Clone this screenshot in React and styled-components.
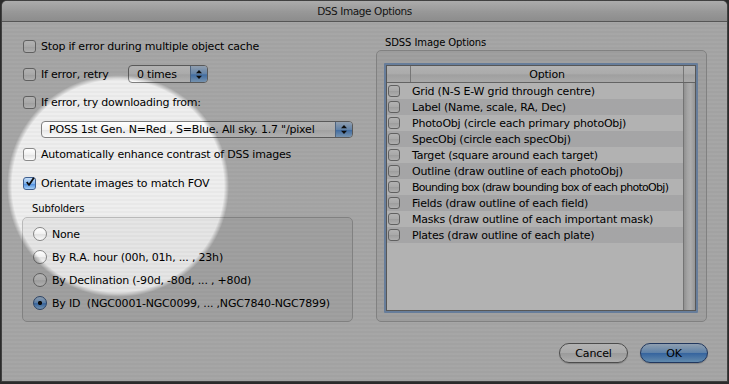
import React from 'react'
import styled, { createGlobalStyle } from 'styled-components'

const GlobalStyle = createGlobalStyle`
  html, body { margin: 0; padding: 0; background: #3d3d3d; }
  body { font-family: "DejaVu Sans", "Liberation Sans", sans-serif; }
  * { box-sizing: border-box; }
`

const Screen = styled.div`
  position: relative;
  width: 729px;
  height: 384px;
  overflow: hidden;
  background: #3d3d3d;
`

const Window = styled.div`
  width: 727px;
  height: 382px;
  margin-left: 1px;
  display: flex;
  flex-direction: column;
  border: 1px solid #5c5c5c;
  border-radius: 6px 6px 0 0;
  overflow: hidden;
  background: repeating-linear-gradient(to bottom, #eeeeee 0, #eeeeee 2px, #e8e8e8 2px, #e8e8e8 4px);
`

const TitleBar = styled.div`
  height: 21px;
  flex: none;
  display: flex;
  align-items: center;
  justify-content: center;
  background: linear-gradient(#f6f6f6, #d9d9d9 55%, #c9c9c9);
  border-bottom: 1px solid #7a7a7a;
  font-size: 10.5px;
  letter-spacing: -0.4px;
  color: #1c1c1c;
`

const Content = styled.div`
  flex: 1;
  display: flex;
  flex-direction: column;
  padding: 15px 19px 0 20px;
`

const Columns = styled.div`
  display: grid;
  grid-template-columns: 331px 331px;
  column-gap: 23px;
`

const Column = styled.div`
  display: flex;
  flex-direction: column;
`

const OptionRow = styled.div`
  display: flex;
  align-items: center;
  gap: 5px;
  height: ${(p) => p.$h || 16}px;
  margin-top: ${(p) => p.$top || 0}px;
  padding-left: ${(p) => (p.$indent == null ? 1 : p.$indent)}px;
`

const Text = styled.span`
  font-size: 11px;
  letter-spacing: ${(p) => (p.$condensed ? '-0.72px' : '-0.2px')};
  color: #000;
  white-space: pre;
  ${(p) => p.$w && `width: ${p.$w}px;`}
`

const SmallLabel = styled.div`
  font-size: 10px;
  letter-spacing: -0.1px;
  color: #000;
  height: 12px;
  line-height: 12px;
  margin-top: ${(p) => p.$top || 0}px;
  padding-left: ${(p) => p.$indent || 0}px;
`

const Box = styled.span`
  flex: none;
  width: ${(p) => p.$size || 13}px;
  height: ${(p) => p.$size || 13}px;
  border-radius: 3px;
  border: 1px solid ${(p) => (p.$checked ? '#3f5f8f' : '#8a8a8a')};
  background: ${(p) =>
    p.$checked
      ? 'linear-gradient(#c6def8, #80b3ec 50%, #4e8fe0 55%, #a6d0f7)'
      : 'linear-gradient(#ffffff, #f1f1f1 50%, #e3e3e3 55%, #fbfbfb)'};
  display: flex;
  align-items: center;
  justify-content: center;
  overflow: visible;
`

const CheckBox = ({ checked, size }) => (
  <Box $checked={checked} $size={size}>
    {checked && (
      <svg width="14" height="14" viewBox="0 0 13 13" style={{ marginTop: -3, marginLeft: 1 }}>
        <path d="M2.3 6.5 L5.2 10.3 L11.5 1" fill="none" stroke="#0c0c0c" strokeWidth="2.3" strokeLinejoin="round" />
      </svg>
    )}
  </Box>
)

const PopUpBox = styled.div`
  flex: none;
  display: flex;
  width: ${(p) => p.$w}px;
  height: ${(p) => p.$h}px;
  margin-left: ${(p) => p.$left || 0}px;
  border: 1px solid #7f7f7f;
  border-radius: 4px;
  overflow: hidden;
  background: linear-gradient(#ffffff, #f3f3f3 50%, #e6e6e6 55%, #fbfbfb);
`

const PopUpText = styled.span`
  flex: 1;
  display: flex;
  align-items: center;
  padding-left: ${(p) => p.$pad}px;
  font-size: 11px;
  letter-spacing: -0.2px;
  white-space: pre;
  color: #000;
`

const PopUpArrows = styled.span`
  width: 17px;
  display: flex;
  align-items: center;
  justify-content: center;
  border-left: 1px solid #6f8fb8;
  background: linear-gradient(#cfe3fa, #8dbbf0 50%, #5c9ae6 55%, #a9d2fa);
`

const PopUp = ({ w, h, left, pad, children }) => (
  <PopUpBox $w={w} $h={h} $left={left}>
    <PopUpText $pad={pad}>{children}</PopUpText>
    <PopUpArrows>
      <svg width="6" height="9" viewBox="0 0 6 9">
        <path d="M3 0 L6 3.3 L0 3.3 Z M0 5.7 L6 5.7 L3 9 Z" fill="#111" />
      </svg>
    </PopUpArrows>
  </PopUpBox>
)

const GroupBox = styled.div`
  display: flex;
  flex-direction: column;
  gap: ${(p) => p.$gap || 0}px;
  height: ${(p) => p.$h}px;
  margin-top: ${(p) => p.$top || 0}px;
  padding: ${(p) => p.$pad};
  border: 1px solid #b9b9b9;
  border-radius: 5px;
  background: rgba(0, 0, 0, 0.035);
`

const RadioDot = styled.span`
  flex: none;
  width: 14px;
  height: 14px;
  border-radius: 50%;
  border: 1px solid ${(p) => (p.$on ? '#3f5f8f' : '#868686')};
  background: ${(p) =>
    p.$on
      ? 'radial-gradient(circle at 50% 50%, #111 0, #111 1.8px, transparent 2.4px), linear-gradient(#c6def8, #80b3ec 50%, #4e8fe0 55%, #a6d0f7)'
      : 'linear-gradient(#ffffff, #f1f1f1 50%, #e1e1e1 55%, #fbfbfb)'};
`

const TableFrame = styled.div`
  flex: 1;
  display: flex;
  border: 2px solid #93b3dc;
  border-radius: 1px;
`

const Table = styled.div`
  flex: 1;
  display: flex;
  flex-direction: column;
  border: 1px solid #7d7d7d;
  background: #ffffff;
`

const HeaderRow = styled.div`
  display: grid;
  grid-template-columns: 23px 1fr 12px;
  height: 17px;
  flex: none;
  border-bottom: 1px solid #8f8f8f;
  background: linear-gradient(#ffffff, #f4f4f4 50%, #e4e4e4 55%, #f2f2f2);
`

const HeaderCell = styled.div`
  display: flex;
  align-items: center;
  justify-content: center;
  border-left: ${(p) => (p.$first ? 'none' : '1px solid #a9a9a9')};
  font-size: 11px;
  letter-spacing: -0.2px;
  color: #000;
`

const TableMain = styled.div`
  flex: 1;
  display: grid;
  grid-template-columns: 1fr 12px;
`

const List = styled.div`
  display: flex;
  flex-direction: column;
`

const ListRow = styled.div`
  display: grid;
  grid-template-columns: 23px 1fr;
  align-items: center;
  height: 16px;
  background: ${(p) => (p.$alt ? '#ececee' : '#ffffff')};
`

const CheckCell = styled.div`
  display: flex;
  padding-left: 1px;
`

const OptionCell = styled.div`
  padding-left: 2px;
  display: flex;
`

const ScrollTrack = styled.div`
  border-left: 1px solid #a5a5a5;
  background: linear-gradient(to right, #cfcfcf, #ececec 35%, #f6f6f6 60%, #d6d6d6);
`

const Footer = styled.div`
  display: flex;
  justify-content: flex-end;
  gap: 12px;
  margin-top: 21px;
`

const Button = styled.div`
  width: ${(p) => p.$w}px;
  height: 20px;
  border-radius: 10px;
  display: flex;
  align-items: center;
  justify-content: center;
  font-size: 11px;
  letter-spacing: -0.1px;
  color: #000;
  border: 1px solid ${(p) => (p.$primary ? '#2f4f86' : '#6d6d6d')};
  background: ${(p) =>
    p.$primary
      ? 'linear-gradient(#cde3fb, #86b9f1 48%, #4d8fe3 52%, #8cc6f7)'
      : 'linear-gradient(#ffffff, #f2f2f2 48%, #dedede 52%, #f7f7f7)'};
  box-shadow: 0 1px 1px rgba(0, 0, 0, 0.2);
`

const Spotlight = styled.div`
  position: absolute;
  inset: 0;
  pointer-events: none;
  background: radial-gradient(circle at 118px 186px, rgba(0, 0, 0, 0) 0, rgba(0, 0, 0, 0) 106px, rgba(0, 0, 0, 0.3) 111px);
`

const sdssOptions = [
  'Grid (N-S E-W grid through centre)',
  'Label (Name, scale, RA, Dec)',
  'PhotoObj (circle each primary photoObj)',
  'SpecObj (circle each specObj)',
  'Target (square around each target)',
  'Outline (draw outline of each photoObj)',
  'Bounding box (draw bounding box of each photoObj)',
  'Fields (draw outline of each field)',
  'Masks (draw outline of each important mask)',
  'Plates (draw outline of each plate)',
]

const subfolders = [
  { label: 'None' },
  { label: 'By R.A. hour (00h, 01h, ... , 23h)' },
  { label: 'By Declination (-90d, -80d, ... , +80d)' },
  { label: 'By ID  (NGC0001-NGC0099, ... ,NGC7840-NGC7899)', on: true },
]

export default function App() {
  return (
    <Screen>
      <GlobalStyle />
      <Window>
        <TitleBar>DSS Image Options</TitleBar>
        <Content>
          <Columns>
            <Column>
              <OptionRow $top={1}>
                <CheckBox />
                <Text>Stop if error during multiple object cache</Text>
              </OptionRow>
              <OptionRow $top={11} $h={18}>
                <CheckBox />
                <Text $w={82}>If error, retry</Text>
                <PopUp w={80} h={18} pad={8}>0 times</PopUp>
              </OptionRow>
              <OptionRow $top={11}>
                <CheckBox />
                <Text>If error, try downloading from:</Text>
              </OptionRow>
              <OptionRow $top={11} $h={17} $indent={0}>
                <PopUp w={312} h={17} left={19} pad={7}>POSS 1st Gen. N=Red , S=Blue. All sky. 1.7 "/pixel</PopUp>
              </OptionRow>
              <OptionRow $top={8}>
                <CheckBox />
                <Text>Automatically enhance contrast of DSS images</Text>
              </OptionRow>
              <OptionRow $top={13}>
                <CheckBox checked />
                <Text>Orientate images to match FOV</Text>
              </OptionRow>
              <SmallLabel $top={12} $indent={10}>Subfolders</SmallLabel>
              <GroupBox $top={2} $h={105} $gap={7} $pad="8px 10px 0 10px">
                {subfolders.map((s) => (
                  <OptionRow key={s.label} $indent={0}>
                    <RadioDot $on={s.on} />
                    <Text>{s.label}</Text>
                  </OptionRow>
                ))}
              </GroupBox>
            </Column>

            <Column>
              <SmallLabel $indent={9}>SDSS Image Options</SmallLabel>
              <GroupBox $top={1} $h={272} $pad="12px 8px 8px 7px">
                <TableFrame>
                  <Table>
                    <HeaderRow>
                      <HeaderCell $first />
                      <HeaderCell>Option</HeaderCell>
                      <HeaderCell />
                    </HeaderRow>
                    <TableMain>
                      <List>
                        {sdssOptions.map((opt, i) => (
                          <ListRow key={opt} $alt={i % 2 === 1}>
                            <CheckCell>
                              <CheckBox size={12} />
                            </CheckCell>
                            <OptionCell>
                              <Text $condensed={opt.startsWith('Bounding')}>{opt}</Text>
                            </OptionCell>
                          </ListRow>
                        ))}
                      </List>
                      <ScrollTrack />
                    </TableMain>
                  </Table>
                </TableFrame>
              </GroupBox>
            </Column>
          </Columns>
          <Footer>
            <Button $w={69}>Cancel</Button>
            <Button $w={68} $primary>OK</Button>
          </Footer>
        </Content>
      </Window>
      <Spotlight />
    </Screen>
  )
}
